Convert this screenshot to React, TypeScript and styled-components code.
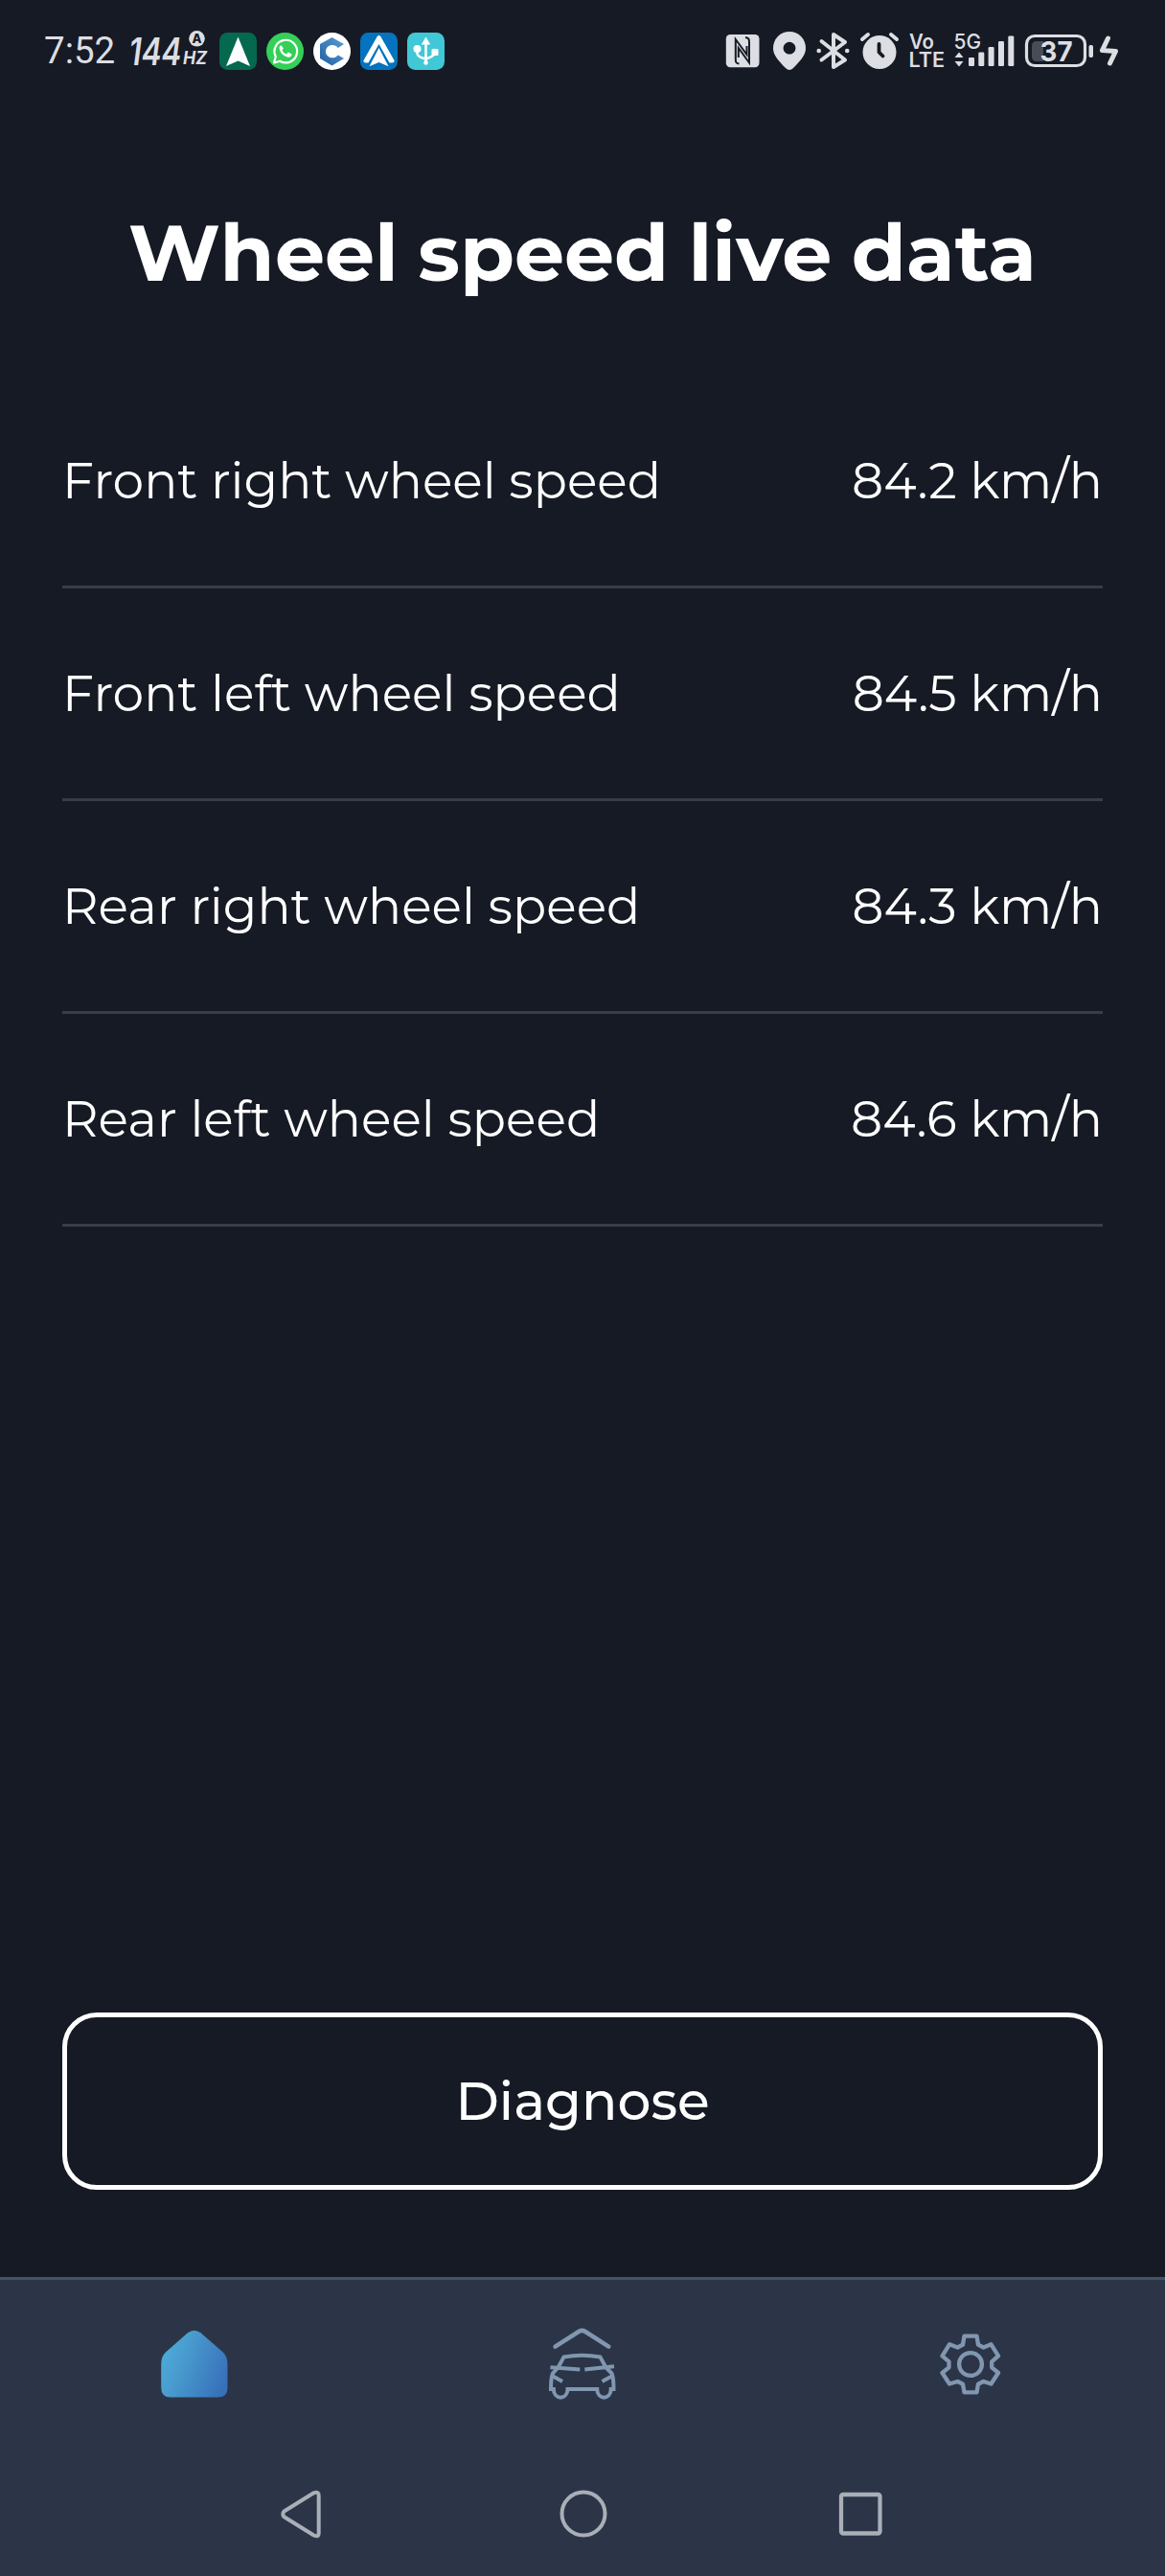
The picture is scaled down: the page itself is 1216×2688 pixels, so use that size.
import React from "react";
import styled, { createGlobalStyle } from "styled-components";

const GlobalStyle = createGlobalStyle`
  * { box-sizing: border-box; }
  body { margin: 0; background: #161a24; }
`;

const Screen = styled.div`
  width: 1216px;
  height: 2688px;
  display: flex;
  flex-direction: column;
  overflow: hidden;
  background: #161a24;
  color: #fff;
  font-family: Montserrat, Inter, sans-serif;
`;

const StatusBar = styled.header`
  height: 106px;
  padding: 0 48px 0 46px;
  display: flex;
  align-items: center;
  justify-content: space-between;
`;

const StatusGroup = styled.div<{ $gap?: number }>`
  display: flex;
  align-items: center;
  gap: ${(p) => p.$gap ?? 0}px;
`;

const Clock = styled.time`
  width: 86px;
  font: 400 38.5px/50px Roboto, sans-serif;
  color: #dcdee3;
`;

const Glyph = styled.svg`
  display: block;
  flex: none;
`;

const RefreshRate = styled(Glyph)`
  margin-right: 10px;
`;

const Heading = styled.h1`
  margin: 0;
  height: 286px;
  padding-top: 104px;
  text-align: center;
  font-size: 82.5px;
  font-weight: 700;
  line-height: 108px;
  word-spacing: -3px;
  white-space: nowrap;
`;

const Readings = styled.main`
  flex: 1;
  display: flex;
  flex-direction: column;
  padding: 0 65px;
`;

const Reading = styled.div`
  height: 222px;
  display: flex;
  align-items: center;
  justify-content: space-between;
  border-bottom: 3px solid #383d48;
  font-size: 52px;
  line-height: 64px;
  font-weight: 400;
  white-space: nowrap;
`;

const DiagnoseButton = styled.button`
  height: 185px;
  margin: 0 65px 91px;
  border: 5px solid #fff;
  border-radius: 36px;
  background: transparent;
  color: #fff;
  font: 500 55px/66px Montserrat, Inter, sans-serif;
`;

const TabBar = styled.nav`
  height: 182px;
  padding-bottom: 3px;
  display: grid;
  grid-template-columns: repeat(3, 1fr);
  justify-items: center;
  align-items: center;
  border-top: 3px solid #435365;
  background: #2b3547;
`;

const SystemBar = styled.footer`
  height: 130px;
  padding: 0 290px;
  display: flex;
  align-items: center;
  justify-content: space-between;
  background: #2b3547;
`;

const LIGHT = "#dcdee3";
const OUTLINE = "#8196af";
const DARK = "#161a24";

const readings = [
  { label: "Front right wheel speed", value: "84.2 km/h" },
  { label: "Front left wheel speed", value: "84.5 km/h" },
  { label: "Rear right wheel speed", value: "84.3 km/h" },
  { label: "Rear left wheel speed", value: "84.6 km/h" },
];

const Hertz = () => (
  <RefreshRate width="87" height="50" viewBox="132 28 87 50">
    <g fill={LIGHT} fontFamily="Inter, sans-serif" fontStyle="italic">
      <text x="134.5" y="67.5" fontSize="39" fontWeight="600" textLength="55" lengthAdjust="spacingAndGlyphs">144</text>
      <text x="191" y="66.5" fontSize="19" fontWeight="700" textLength="25" lengthAdjust="spacingAndGlyphs">HZ</text>
    </g>
    <circle cx="205.5" cy="40.3" r="8.3" fill={LIGHT} />
    <text x="205.5" y="45" textAnchor="middle" fill={DARK} fontFamily="Inter, sans-serif" fontSize="13" fontWeight="800">A</text>
  </RefreshRate>
);

const NavigatorApp = () => (
  <Glyph width="39" height="39" viewBox="0 0 39 39">
    <rect width="39" height="39" rx="8.5" fill="#04694f" />
    <path d="M19.5 4.5 32 35 19.5 29.5 7 35Z" fill="#fff" />
  </Glyph>
);

const WhatsApp = () => (
  <Glyph width="39" height="39" viewBox="0 0 39 39">
    <circle cx="19.5" cy="19.5" r="19.5" fill="#34d058" />
    <path d="M8 31.5 9.8 25A11.8 11.8 0 1 1 14.2 29.7Z" fill="none" stroke="#fff" strokeWidth="2.2" strokeLinejoin="round" />
    <path d="M15.5 13.3c-1.5.3-2.3 1.9-1.8 4 1 4.3 5.1 8 9.2 8.4 2.2.1 3.7-1.2 3.7-3.2l-3.7-2-2 2c-2-.7-3.6-2.3-4.4-4.3l1.4-1.7Z" fill="#fff" />
  </Glyph>
);

const CApp = () => (
  <Glyph width="39" height="39" viewBox="0 0 39 39">
    <defs>
      <linearGradient id="c-fill" x1="0" y1="1" x2="1" y2="0">
        <stop offset="0" stopColor="#2261a3" />
        <stop offset="1" stopColor="#5b9bd4" />
      </linearGradient>
    </defs>
    <circle cx="19.5" cy="19.5" r="19.5" fill="#fff" />
    <path d="M19.5 5 32 12 25.8 16C21.5 10.5 13 13.5 13 19.7S21.5 29 25.8 23.5L32 27 19.5 34.5 7 27V12Z" fill="url(#c-fill)" />
  </Glyph>
);

const RoadApp = () => (
  <Glyph width="39" height="39" viewBox="0 0 39 39">
    <rect width="39" height="39" rx="8.5" fill="#0573bd" />
    <path d="M17.6 4.3Q19.5 1.8 21.4 4.3L35.5 29Q36 31.5 33 31.5H30.5L19.5 12 8.5 31.5H6Q3 31.5 3.5 29Z" fill="#fff" />
    <path d="M19.5 16 29.5 35.3 19.5 31 9.5 35.3Z" fill="#fff" />
  </Glyph>
);

const UsbApp = () => (
  <Glyph width="39" height="39" viewBox="0 0 39 39">
    <rect width="39" height="39" rx="8.5" fill="#41c8d6" />
    <path d="M19.5 10V31M10.5 18v3.5q0 4 9 6M28.5 18v3.5q0 3-9 6" fill="none" stroke="#fff" strokeWidth="2.6" strokeLinecap="round" />
    <path d="M19.5 4.5 24.2 12.5H14.8Z" fill="#fff" />
    <circle cx="10.5" cy="17" r="4" fill="#fff" />
    <rect x="25.5" y="17" width="7" height="7" rx="1" fill="#fff" />
    <circle cx="19.5" cy="31.5" r="2.3" fill="#fff" />
  </Glyph>
);

const StatusIcons = () => (
  <>
    <Glyph width="47" height="50" viewBox="757 28 47 50">
      <rect x="757.8" y="36" width="34.7" height="34.3" rx="4.5" fill={LIGHT} />
      <path d="M771.5 66.5C767.5 66 767.8 64 767.8 61V41L779.5 57V48M778 39C782 39.5 782 41.5 782 44.5V65.5L770.8 50V60" fill="none" stroke={DARK} strokeWidth="2" />
    </Glyph>
    <Glyph width="46" height="50" viewBox="804 28 46 50">
      <path fillRule="evenodd" d="M824 33a17 17 0 0 1 17 17.2c0 6.8-4.5 12-13 20.8q-4 4-8 0c-8.5-8.8-13-14-13-20.8A17 17 0 0 1 824 33ZM824 43.8a6.4 6.4 0 1 0 .01 0Z" fill={LIGHT} />
    </Glyph>
    <Glyph width="46" height="50" viewBox="850 28 46 50" fill="none" stroke={LIGHT} strokeWidth="4" strokeLinecap="round" strokeLinejoin="round">
      <path d="M857.5 43 882 62.5 870 70V36L882 44 857.5 62.5" />
      <g fill={LIGHT} stroke="none"><circle cx="854.7" cy="53" r="2.3" /><circle cx="884.2" cy="53" r="2.3" /></g>
    </Glyph>
    <Glyph width="50" height="50" viewBox="896 28 50 50">
      <circle cx="918" cy="54.5" r="17.5" fill={LIGHT} />
      <path d="M900 41 906 36M936 41 930 36" stroke={LIGHT} strokeWidth="4" strokeLinecap="round" />
      <path d="M917.5 46V54.5L921.5 58.5" fill="none" stroke={DARK} strokeWidth="3.8" strokeLinecap="round" strokeLinejoin="round" />
    </Glyph>
    <Glyph width="46" height="50" viewBox="946 28 46 50" fill={LIGHT} fontFamily="Inter, sans-serif" fontWeight="600">
      <text x="949" y="50.5" fontSize="21" textLength="26" lengthAdjust="spacingAndGlyphs">Vo</text>
      <text x="948.5" y="70" fontSize="21" textLength="37.5" lengthAdjust="spacingAndGlyphs">LTE</text>
    </Glyph>
    <Glyph width="74" height="50" viewBox="992 28 74 50" fill={LIGHT}>
      <text x="995.5" y="50.5" fontFamily="Inter, sans-serif" fontSize="21.5" fontWeight="500" textLength="28.5" lengthAdjust="spacingAndGlyphs">5G</text>
      <path d="M996.5 60 1001 54.5 1005.5 60ZM996.5 64 1001 69.5 1005.5 64Z" />
      <rect x="1011" y="60" width="6" height="9" rx="1.2" />
      <rect x="1021.3" y="54.5" width="6" height="14.5" rx="1.2" />
      <rect x="1031.6" y="49" width="6" height="20" rx="1.2" />
      <rect x="1042" y="43" width="6" height="26" rx="1.2" />
      <rect x="1052.3" y="37.5" width="6" height="31.5" rx="1.2" />
    </Glyph>
    <Glyph width="102" height="50" viewBox="1066 28 102 50">
      <rect x="1071.5" y="37.5" width="61" height="31" rx="8.5" fill="none" stroke={LIGHT} strokeWidth="3.2" />
      <path d="M1082 43H1089V64H1082Q1077 64 1077 59V48Q1077 43 1082 43Z" fill="#484c56" />
      <text x="1085.5" y="63.5" fill={LIGHT} fontFamily="Inter, sans-serif" fontSize="29" fontWeight="700" textLength="34" lengthAdjust="spacingAndGlyphs">37</text>
      <rect x="1136.5" y="47" width="4.5" height="13" rx="1.8" fill={LIGHT} />
      <path d="M1156.5 40 1150.5 52.5 1164.5 53.5 1158.5 66" fill="none" stroke={LIGHT} strokeWidth="5" strokeLinecap="round" strokeLinejoin="round" />
    </Glyph>
  </>
);

const HomeIcon = () => (
  <Glyph width="80" height="84" viewBox="163 2425 80 84">
    <defs>
      <linearGradient id="home-fill" x1="0" y1=".35" x2="1" y2=".75">
        <stop offset="0" stopColor="#4cabd8" />
        <stop offset=".25" stopColor="#4a9fd0" />
        <stop offset="1" stopColor="#376fb9" />
      </linearGradient>
    </defs>
    <path d="M196 2434.3Q202.7 2429.3 209.5 2434.3L232.5 2454.3Q237.5 2459 237.5 2467V2491.5Q237.5 2501.5 227.5 2501.5H178.2Q168.2 2501.5 168.2 2491.5V2467Q168.2 2459 173.2 2454.3Z" fill="url(#home-fill)" />
  </Glyph>
);

const GarageIcon = () => (
  <Glyph width="80" height="84" viewBox="568 2425 80 84" fill="none" stroke={OUTLINE} strokeWidth="4" strokeLinecap="round" strokeLinejoin="round">
    <path d="M579.5 2448.7 604 2433Q607.5 2430.8 611 2433L635.3 2448.7" strokeWidth="4.5" />
    <g strokeLinecap="butt" strokeLinejoin="miter">
      <path d="M574.5 2470.3 605.3 2472.6M641 2469.3 610.3 2472.6" />
      <path d="M582.5 2470.5 588.5 2459.5Q607.5 2456 626.5 2459.5L632.5 2470.5" />
      <path d="M582.5 2470.5 577 2476.5Q575 2481 575 2493H577.8C578 2504.5 592.3 2504.5 592.5 2493H623.2C623.4 2504.5 637.5 2504.5 637.7 2493H640.5Q640.5 2481 638.5 2476.5L632.5 2470.5" />
      <path d="M577 2479.5 587 2485M638.5 2479.5 628.5 2485" />
    </g>
  </Glyph>
);

const SettingsIcon = () => (
  <Glyph width="80" height="84" viewBox="973 2425 80 84" fill="none" stroke={OUTLINE} strokeWidth="4.3" strokeLinejoin="round">
    <path d="M1006.5 2437.7H1019.5L1021 2446.6 1026.5 2449.5 1034.5 2446.3 1042 2458.3 1035.2 2464.3V2470.3L1042 2476 1034.5 2487.5 1026.5 2485 1021 2487.7 1019.5 2496.3H1006.5L1005 2487.7 999.5 2485 991 2487.5 983.5 2476 990.5 2470.3V2464.3L983.5 2458.3 991 2446.3 999.5 2449.5 1005 2446.6Z" />
    <circle cx="1013" cy="2467" r="11.9" />
  </Glyph>
);

const Back = () => (
  <Glyph width="53" height="56" viewBox="290 2595 53 56" fill="none" stroke="#a9aeb7" strokeWidth="4" strokeLinejoin="round">
    <path d="M296.5 2620.5 327.5 2601.3Q332.7 2599.5 332.7 2604V2643Q332.7 2648 327.5 2645.5L296.5 2626.3Q294 2623.4 296.5 2620.5Z" />
  </Glyph>
);

const Home = () => (
  <Glyph width="56" height="56" viewBox="0 0 56 56" fill="none" stroke="#a9aeb7" strokeWidth="4">
    <circle cx="28" cy="28" r="22.5" />
  </Glyph>
);

const Recents = () => (
  <Glyph width="52" height="56" viewBox="0 0 52 56" fill="none" stroke="#a9aeb7" strokeWidth="4.3">
    <rect x="4" y="8" width="40.5" height="40.5" rx="2" />
  </Glyph>
);

export default function App() {
  return (
    <Screen>
      <GlobalStyle />
      <StatusBar>
        <StatusGroup>
          <Clock>7:52</Clock>
          <Hertz />
          <StatusGroup $gap={10}>
            <NavigatorApp />
            <WhatsApp />
            <CApp />
            <RoadApp />
            <UsbApp />
          </StatusGroup>
        </StatusGroup>
        <StatusGroup>
          <StatusIcons />
        </StatusGroup>
      </StatusBar>
      <Heading>Wheel speed live data</Heading>
      <Readings>
        {readings.map((r) => (
          <Reading key={r.label}>
            <span>{r.label}</span>
            <span>{r.value}</span>
          </Reading>
        ))}
      </Readings>
      <DiagnoseButton>Diagnose</DiagnoseButton>
      <TabBar>
        <HomeIcon />
        <GarageIcon />
        <SettingsIcon />
      </TabBar>
      <SystemBar>
        <Back />
        <Home />
        <Recents />
      </SystemBar>
    </Screen>
  );
}
